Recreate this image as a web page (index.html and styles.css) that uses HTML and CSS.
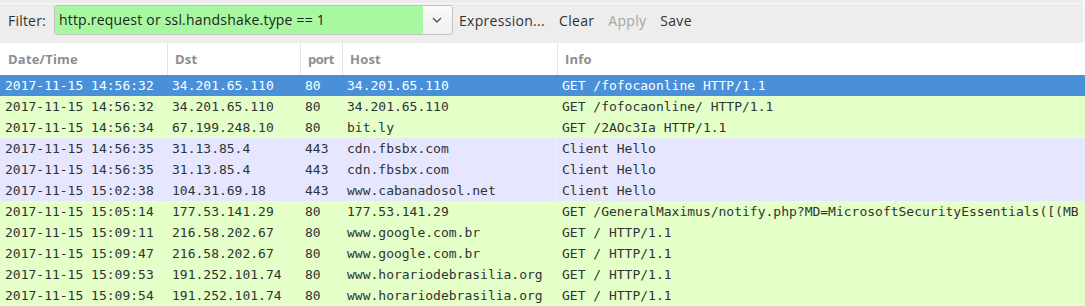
FILE: index.html
```html
<!doctype html>
<html>
<head>
  <title>Packet list</title>
  <meta charset='UTF-8'>
  <link rel="stylesheet" href="styles.css">
</head>
<body>
  <main>
    <div class="filter-bar">
      <label>Filter:</label>
      <div class="combo">
        <span class="combo-entry">http.request or ssl.handshake.type == 1</span>
        <span class="combo-button">
          <svg width="10" height="6" viewBox="0 0 10 6"><path d="M1 1 L5 5 L9 1" fill="none" stroke="#555" stroke-width="1.4"/></svg>
        </span>
      </div>
      <span class="action">Expression...</span>
      <span class="action">Clear</span>
      <span class="action disabled">Apply</span>
      <span class="action">Save</span>
    </div>
    <div class="packets">
      <div class="row head">
        <span>Date/Time</span><span>Dst</span><span>port</span><span>Host</span><span>Info</span>
      </div>
      <div class="row selected">
        <span>2017-11-15 14:56:32</span><span>34.201.65.110</span><span>80</span><span>34.201.65.110</span><span>GET /fofocaonline HTTP/1.1</span>
      </div>
      <div class="row http">
        <span>2017-11-15 14:56:32</span><span>34.201.65.110</span><span>80</span><span>34.201.65.110</span><span>GET /fofocaonline/ HTTP/1.1</span>
      </div>
      <div class="row http">
        <span>2017-11-15 14:56:34</span><span>67.199.248.10</span><span>80</span><span>bit.ly</span><span>GET /2AOc3Ia HTTP/1.1</span>
      </div>
      <div class="row tls">
        <span>2017-11-15 14:56:35</span><span>31.13.85.4</span><span>443</span><span>cdn.fbsbx.com</span><span>Client Hello</span>
      </div>
      <div class="row tls">
        <span>2017-11-15 14:56:35</span><span>31.13.85.4</span><span>443</span><span>cdn.fbsbx.com</span><span>Client Hello</span>
      </div>
      <div class="row tls">
        <span>2017-11-15 15:02:38</span><span>104.31.69.18</span><span>443</span><span>www.cabanadosol.net</span><span>Client Hello</span>
      </div>
      <div class="row http">
        <span>2017-11-15 15:05:14</span><span>177.53.141.29</span><span>80</span><span>177.53.141.29</span><span>GET /GeneralMaximus/notify.php?MD=MicrosoftSecurityEssentials([(MB</span>
      </div>
      <div class="row http">
        <span>2017-11-15 15:09:11</span><span>216.58.202.67</span><span>80</span><span>www.google.com.br</span><span>GET / HTTP/1.1</span>
      </div>
      <div class="row http">
        <span>2017-11-15 15:09:47</span><span>216.58.202.67</span><span>80</span><span>www.google.com.br</span><span>GET / HTTP/1.1</span>
      </div>
      <div class="row http">
        <span>2017-11-15 15:09:53</span><span>191.252.101.74</span><span>80</span><span>www.horariodebrasilia.org</span><span>GET / HTTP/1.1</span>
      </div>
      <div class="row http">
        <span>2017-11-15 15:09:54</span><span>191.252.101.74</span><span>80</span><span>www.horariodebrasilia.org</span><span>GET / HTTP/1.1</span>
      </div>
    </div>
  </main>
</body>
</html>
```

FILE: styles.css
```css
html, body { height: 100% }
body {
  margin: 0;
  background: #fff;
  color: #2e3436;
  font: 14px 'Open Sans', 'DejaVu Sans', sans-serif;
  overflow: hidden }
main {
  display: flex;
  flex-flow: column;
  width: 1085px }
  .filter-bar {
    display: flex;
    align-items: center;
    box-sizing: border-box;
    height: 43px;
    padding: 0 0 3px 8px;
    background: linear-gradient(#ededed 3px, #f8f8f8 3px, #f8f8f8 4px, #ededed 4px);
    box-shadow: inset -2px 0 #f6f6f6 }
    .filter-bar label { margin-right: 8px; letter-spacing: .2px }
    .combo {
      display: flex;
      width: 397px;
      height: 28px;
      border: 1px solid #c3c3c3;
      border-radius: 3px;
      overflow: hidden;
      margin-right: 6px }
      .combo-entry {
        flex: 1;
        background: #a8f8a2;
        padding-left: 4px;
        line-height: 28px;
        letter-spacing: .2px;
        color: #1e1e1e }
      .combo-button {
        width: 29px;
        display: flex;
        align-items: center;
        justify-content: center;
        background: linear-gradient(#fafafa, #f0f0f0) }
    .action { margin-right: 14px; letter-spacing: .3px }
    .action.disabled { color: #a4a6a3 }
  .packets {
    font: 13px 'DejaVu Sans Mono', monospace }
    .row {
      display: grid;
      grid-template-columns: 167px 133px 42px 215px 1fr;
      height: 21px;
      line-height: 21px;
      white-space: nowrap }
      .row > span {
        padding-left: 5px;
        overflow: hidden }
      .row > span:last-child { overflow: visible }
    .row.head {
      height: 32px;
      font: bold 13px 'Open Sans', 'DejaVu Sans', sans-serif;
      line-height: 32px;
      letter-spacing: .2px;
      color: #8b8e8f;
      background: #fff }
      .row.head > span {
        padding-left: 7px;
        border-left: 1px solid #e2e2e2 }
      .row.head > span:first-child { border-left: 0; padding-left: 8px }
      .row.head > span:nth-child(3) { letter-spacing: -.5px }
    .row.selected {
      background: #4a90d9;
      color: #fff }
    .row.http { background: #e4ffc7 }
    .row.tls { background: #e7e6ff }
      .row.tls > span:nth-child(4) { box-shadow: inset -1px 0 #f2f1ff }
```
